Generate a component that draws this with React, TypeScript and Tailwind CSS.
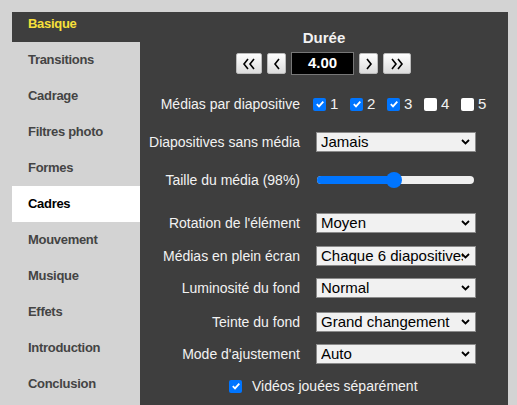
import React from "react";

const tabs = [
  "Basique",
  "Transitions",
  "Cadrage",
  "Filtres photo",
  "Formes",
  "Cadres",
  "Mouvement",
  "Musique",
  "Effets",
  "Introduction",
  "Conclusion",
];

const font = { fontFamily: '"Liberation Sans", Arial, sans-serif' };

const Chevron = ({ dir, double }: { dir: "left" | "right"; double?: boolean }) => {
  const pts = (x: number) =>
    dir === "left" ? `${x + 4},2 ${x},7 ${x + 4},12` : `${x},2 ${x + 4},7 ${x},12`;
  return (
    <svg width={double ? 14 : 8} height="14" viewBox={double ? "0 0 14 14" : "0 0 8 14"}>
      {double ? (
        <>
          <polyline points={pts(2)} fill="none" stroke="#000" strokeWidth="1.6" />
          <polyline points={pts(8)} fill="none" stroke="#000" strokeWidth="1.6" />
        </>
      ) : (
        <polyline points={pts(2)} fill="none" stroke="#000" strokeWidth="1.6" />
      )}
    </svg>
  );
};

const StepButton = ({ children, w }: { children: React.ReactNode; w: string }) => (
  <button
    className={`${w} h-[21px] flex items-center justify-center rounded-[2px] bg-gradient-to-b from-white to-[#dcdcdc] border border-[#bbb]`}
  >
    {children}
  </button>
);

const Check = ({ on }: { on: boolean }) =>
  on ? (
    <span className="w-[13px] h-[13px] rounded-[2px] bg-[#0075ff] flex items-center justify-center shrink-0">
      <svg width="10" height="10" viewBox="0 0 10 10">
        <polyline points="1.8,5.2 4,7.4 8.3,2.6" fill="none" stroke="#fff" strokeWidth="1.8" />
      </svg>
    </span>
  ) : (
    <span className="w-[13px] h-[13px] rounded-[2px] bg-white shrink-0" />
  );

const Select = ({ value }: { value: string }) => (
  <div className="w-[160px] h-[20px] bg-[#f1f1f1] border border-[#8a8a8a] flex items-center pl-[4px] pr-[5px] overflow-hidden">
    <span className="flex-1 overflow-hidden whitespace-nowrap text-[15px] leading-[18px] text-black">{value}</span>
    <svg width="9" height="6" viewBox="0 0 9 6" className="shrink-0 -ml-[2px]">
      <polyline points="1,1 4.5,4.5 8,1" fill="none" stroke="#000" strokeWidth="1.8" />
    </svg>
  </div>
);

const Row = ({ label, children, mt }: { label: string; children: React.ReactNode; mt: string }) => (
  <div className={`flex items-center h-[20px] ${mt}`}>
    <div className="w-[160px] text-right text-[14px] text-[#f2f2f2] whitespace-nowrap">{label}</div>
    <div className="ml-[16px] flex items-center">{children}</div>
  </div>
);

export default function App() {
  return (
    <div className="w-[517px] h-[405px] overflow-hidden bg-[#d3d3d3] pt-3 pl-3 pr-[9px] flex" style={font}>
      <div className="flex-1 flex bg-[#3e3e3e]">
        <div className="w-[128px] bg-[#d3d3d3] flex flex-col">
          {tabs.map((t, i) => (
            <div
              key={t}
              className={`flex items-center pl-4 text-[13px] font-bold tracking-[-0.3px] ${
                i === 0
                  ? "h-[30px] pb-[6px] bg-[#3e3e3e] text-[#f7e03a]"
                  : i === 5
                  ? "h-9 bg-white text-black"
                  : "h-9 text-[#444]"
              }`}
            >
              {t}
            </div>
          ))}
        </div>

        <div className="flex-1 flex flex-col">
          <div className="pt-4 h-[36px] text-center text-[15px] leading-[20px] font-bold text-[#f2f2f2]">
            Durée
          </div>
          <div className="mt-[4px] flex items-center gap-[5px] pl-[96px]">
            <StepButton w="w-[26px]">
              <Chevron dir="left" double />
            </StepButton>
            <StepButton w="w-[19px]">
              <Chevron dir="left" />
            </StepButton>
            <div className="w-[63px] h-[23px] bg-black border border-[#777] flex items-center justify-center text-[15px] font-bold text-white">
              4.00
            </div>
            <StepButton w="w-[19px]">
              <Chevron dir="right" />
            </StepButton>
            <StepButton w="w-[28px]">
              <Chevron dir="right" double />
            </StepButton>
          </div>

          <Row label="Médias par diapositive" mt="mt-[19px]">
            <div className="flex items-center -ml-[3px] text-[15px] text-[#f2f2f2]">
              {[1, 2, 3, 4, 5].map((n) => (
                <div key={n} className="flex items-center gap-[4px] w-[37px]">
                  <Check on={n <= 3} />
                  <span>{n}</span>
                </div>
              ))}
            </div>
          </Row>

          <Row label="Diapositives sans média" mt="mt-[18px]">
            <Select value="Jamais" />
          </Row>

          <Row label="Taille du média (98%)" mt="mt-[18px]">
            <div className="relative w-[157px] h-[20px] flex items-center ml-[1px]">
              <div className="w-full h-[8px] rounded-full bg-[#efefef] overflow-hidden">
                <div className="w-[77px] h-full bg-[#0075ff]" />
              </div>
              <div className="absolute left-[69px] top-[2px] w-[16px] h-[16px] rounded-full bg-[#0075ff]" />
            </div>
          </Row>

          <Row label="Rotation de l'élément" mt="mt-[23px]">
            <Select value="Moyen" />
          </Row>
          <Row label="Médias en plein écran" mt="mt-[13px]">
            <Select value="Chaque 6 diapositives" />
          </Row>
          <Row label="Luminosité du fond" mt="mt-[12px]">
            <Select value="Normal" />
          </Row>
          <Row label="Teinte du fond" mt="mt-[14px]">
            <Select value="Grand changement" />
          </Row>
          <Row label="Mode d'ajustement" mt="mt-[12px]">
            <Select value="Auto" />
          </Row>

          <div className="mt-[12px] h-[20px] flex items-center pl-[89px] gap-[10px] text-[14px] text-[#f2f2f2]">
            <Check on />
            <span>Vidéos jouées séparément</span>
          </div>
        </div>
      </div>
    </div>
  );
}
